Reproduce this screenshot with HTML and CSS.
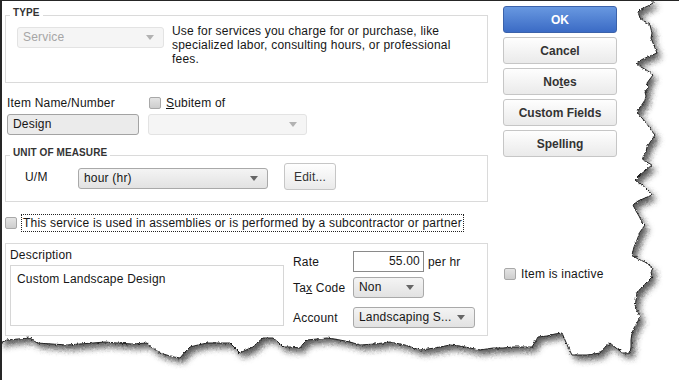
FILE: index.html
```html
<!DOCTYPE html>
<html lang="en">
<head>
  <meta charset="UTF-8">
  <title>Edit Item</title>
  <link rel="stylesheet" href="styles.css">
</head>
<body>
  <div class="dialog">
    <div class="main">
      <div class="group type-group">
        <div class="group-title">TYPE</div>
        <div class="type-body">
          <div class="select disabled type-select">
            <span>Service</span>
            <svg class="arrow" viewBox="0 0 8 5"><polygon points="0,0 8,0 4,5"/></svg>
          </div>
          <p class="type-desc">Use for services you charge for or purchase, like specialized labor, consulting hours, or professional fees.</p>
        </div>
      </div>

      <div class="name-row">
        <div class="field">
          <div class="field-label">Item Name/Number</div>
          <div class="textbox name-box">Design</div>
        </div>
        <div class="field">
          <div class="field-label check sub-check"><span class="box"></span><span><u>S</u>ubitem of</span></div>
          <div class="select disabled sub-select">
            <span></span>
            <svg class="arrow" viewBox="0 0 8 5"><polygon points="0,0 8,0 4,5"/></svg>
          </div>
        </div>
      </div>

      <div class="group uom-group">
        <div class="group-title">UNIT OF MEASURE</div>
        <div class="uom-row">
          <span class="uom-label">U/M</span>
          <div class="select uom-select">
            <span>hour (hr)</span>
            <svg class="arrow" viewBox="0 0 8 5"><polygon points="0,0 8,0 4,5"/></svg>
          </div>
          <div class="btn edit-btn">Edit...</div>
        </div>
      </div>

      <div class="assembly-row">
        <span class="box"></span>
        <span class="focus-label">This service is used in assemblies or is performed by a subcontractor or partner</span>
      </div>

      <div class="group detail-group">
        <div class="desc-col">
          <div class="desc-label">Description</div>
          <div class="desc-box">Custom Landscape Design</div>
        </div>
        <div class="price-col">
          <div class="price-row">
            <span class="plabel">Rate</span>
            <div class="rate-box">55.00</div>
            <span class="per">per hr</span>
          </div>
          <div class="price-row">
            <span class="plabel">Ta<u>x</u> Code</span>
            <div class="select tax-select">
              <span>Non</span>
              <svg class="arrow" viewBox="0 0 8 5"><polygon points="0,0 8,0 4,5"/></svg>
            </div>
          </div>
          <div class="price-row account-row">
            <span class="plabel">Account</span>
            <div class="select acct-select">
              <span>Landscaping S...</span>
              <svg class="arrow" viewBox="0 0 8 5"><polygon points="0,0 8,0 4,5"/></svg>
            </div>
          </div>
        </div>
      </div>
    </div>

    <div class="side">
      <div class="btn primary">OK</div>
      <div class="btn">Cancel</div>
      <div class="btn">No<u>t</u>es</div>
      <div class="btn">Custom Fields</div>
      <div class="btn">Spellin<u>g</u></div>
      <div class="check inactive"><span class="box"></span><span>Item is inactive</span></div>
    </div>

    <!-- torn paper edge drawn over the dialog -->
    <svg class="tear" width="679" height="380" viewBox="0 0 679 380">
      <defs>
        <filter id="soft" x="-5%" y="-5%" width="110%" height="110%"><feGaussianBlur stdDeviation="3"/></filter>
        <filter id="rough" x="-2%" y="-2%" width="104%" height="104%">
          <feTurbulence type="fractalNoise" baseFrequency="0.45" numOctaves="2" seed="4" result="noise"/>
          <feDisplacementMap in="SourceGraphic" in2="noise" scale="3" xChannelSelector="R" yChannelSelector="G"/>
        </filter>
        <clipPath id="outside">
          <path clip-rule="evenodd" d="M-5 -5H684V385H-5Z M0 0 L653 0 653 3 648 6 641 9 638 12 639 15 640 18 644 21 650 25 651 29 652 33 651 38 653 43 655 48 657 53 650 56 643 59 636 63 641 67 648 71 653 75 650 79 647 83 648 88 645 92 646 96 645 100 641 106 637 112 642 118 647 124 651 130 655 135 651 141 647 147 646 152 643 157 643 160 652 165 646 170 640 175 635 180 640 184 645 187 649 191 652 195 645 198 638 201 633 205 636 211 639 216 642 222 645 225 640 232 637 240 634 247 632 255 638 259 645 262 653 268 651 272 652 277 646 283 641 288 637 293 636 300 635 307 638 312 640 317 637 323 634 328 632 333 631 340 631 347 630 353 623 353 616 348 610 343 605 347 600 353 594 354 587 355 580 355 572 355 568 347 565 340 562 333 555 334 547 336 538 337 535 342 532 347 522 347 513 347 503 348 493 348 480 350 470 348 460 346 450 345 435 348 420 350 405 345 390 342 375 344 360 345 350 342 340 340 327 338 317 339 307 340 303 344 300 348 291 347 283 347 278 342 273 338 263 338 258 342 253 347 246 350 240 353 235 348 230 343 218 343 207 343 198 345 190 347 185 352 180 358 170 356 160 353 153 348 147 343 132 344 117 343 105 342 93 343 80 344 67 345 52 344 37 343 33 340 30 338 18 339 7 340 0 343Z"/>
        </clipPath>
      </defs>
      <g filter="url(#rough)">
        <rect x="-5" y="-5" width="689" height="390" fill="#fff" clip-path="url(#outside)"/>
        <g clip-path="url(#outside)">
          <path transform="translate(4,5)" fill="#000" fill-opacity="0.65" filter="url(#soft)" d="M0 0 L653 0 653 3 648 6 641 9 638 12 639 15 640 18 644 21 650 25 651 29 652 33 651 38 653 43 655 48 657 53 650 56 643 59 636 63 641 67 648 71 653 75 650 79 647 83 648 88 645 92 646 96 645 100 641 106 637 112 642 118 647 124 651 130 655 135 651 141 647 147 646 152 643 157 643 160 652 165 646 170 640 175 635 180 640 184 645 187 649 191 652 195 645 198 638 201 633 205 636 211 639 216 642 222 645 225 640 232 637 240 634 247 632 255 638 259 645 262 653 268 651 272 652 277 646 283 641 288 637 293 636 300 635 307 638 312 640 317 637 323 634 328 632 333 631 340 631 347 630 353 623 353 616 348 610 343 605 347 600 353 594 354 587 355 580 355 572 355 568 347 565 340 562 333 555 334 547 336 538 337 535 342 532 347 522 347 513 347 503 348 493 348 480 350 470 348 460 346 450 345 435 348 420 350 405 345 390 342 375 344 360 345 350 342 340 340 327 338 317 339 307 340 303 344 300 348 291 347 283 347 278 342 273 338 263 338 258 342 253 347 246 350 240 353 235 348 230 343 218 343 207 343 198 345 190 347 185 352 180 358 170 356 160 353 153 348 147 343 132 344 117 343 105 342 93 343 80 344 67 345 52 344 37 343 33 340 30 338 18 339 7 340 0 343Z"/>
        </g>
        <polyline fill="none" stroke="#222" stroke-width="1" points="653,0.5 653,3 648,6 641,9 638,12 639,15 640,18 644,21 650,25 651,29 652,33 651,38 653,43 655,48 657,53 650,56 643,59 636,63 641,67 648,71 653,75 650,79 647,83 648,88 645,92 646,96 645,100 641,106 637,112 642,118 647,124 651,130 655,135 651,141 647,147 646,152 643,157 643,160 652,165 646,170 640,175 635,180 640,184 645,187 649,191 652,195 645,198 638,201 633,205 636,211 639,216 642,222 645,225 640,232 637,240 634,247 632,255 638,259 645,262 653,268 651,272 652,277 646,283 641,288 637,293 636,300 635,307 638,312 640,317 637,323 634,328 632,333 631,340 631,347 630,353 623,353 616,348 610,343 605,347 600,353 594,354 587,355 580,355 572,355 568,347 565,340 562,333 555,334 547,336 538,337 535,342 532,347 522,347 513,347 503,348 493,348 480,350 470,348 460,346 450,345 435,348 420,350 405,345 390,342 375,344 360,345 350,342 340,340 327,338 317,339 307,340 303,344 300,348 291,347 283,347 278,342 273,338 263,338 258,342 253,347 246,350 240,353 235,348 230,343 218,343 207,343 198,345 190,347 185,352 180,358 170,356 160,353 153,348 147,343 132,344 117,343 105,342 93,343 80,344 67,345 52,344 37,343 33,340 30,338 18,339 7,340 0,343"/>
      </g>
    </svg>
  </div>
</body>
</html>
```

FILE: styles.css
```css
body {
  margin: 0;
  background: #fff;
  font-family: "Liberation Sans", Arial, sans-serif;
  font-size: 12px;
  color: #161616;
  letter-spacing: 0.2px;
}

.dialog {
  position: relative;
  display: flex;
  width: 679px;
  height: 380px;
  box-sizing: border-box;
  border-top: 1px solid #262626;
  border-left: 2px solid #262626;
  overflow: hidden;
}

.main {
  width: 486px;
  flex: none;
}

.group {
  margin-left: 3px;
  width: 483px;
  box-sizing: border-box;
  border: 1px solid #dadada;
}

.group-title {
  width: fit-content;
  margin: -9px 0 0 4px;
  padding: 0 3px;
  background: #fff;
  font-size: 10px;
  font-weight: bold;
  line-height: 12px;
  color: #333;
  letter-spacing: 0.1px;
}

.type-group {
  margin-top: 14px;
  height: 68px;
}

.type-body {
  display: flex;
  align-items: flex-start;
  gap: 8px;
  margin-top: 8px;
  padding-left: 11px;
}

.type-desc {
  margin: -3px 0 0;
  width: 296px;
  line-height: 14px;
}

.select {
  display: flex;
  align-items: center;
  justify-content: space-between;
  box-sizing: border-box;
  height: 21px;
  padding: 0 9px 0 5px;
  border: 1px solid #a9a9a9;
  border-radius: 3px;
  background: linear-gradient(#f4f4f4, #e2e2e2);
  line-height: 19px;
}

.select.disabled {
  border-color: #e3e3e3;
  background: #f5f5f5;
  color: #a6a6a6;
}

.arrow {
  width: 8px;
  height: 5px;
  fill: #666;
}

.disabled .arrow {
  fill: #b2b2b2;
}

.type-select { width: 147px; }

.name-row {
  display: flex;
  gap: 9px;
  margin: 13px 0 0 5px;
}

.field-label {
  height: 14px;
  line-height: 14px;
}

.check {
  display: flex;
  align-items: center;
  gap: 5px;
}

.sub-check { padding-left: 1px; }

.box {
  flex: none;
  width: 12px;
  height: 12px;
  box-sizing: border-box;
  border: 1px solid #a8a8a8;
  border-radius: 2px;
  background: linear-gradient(#e4e4e4, #cdcdcd);
}

.textbox {
  box-sizing: border-box;
  height: 21px;
  border: 1px solid #a3a3a3;
  border-radius: 3px;
  background: #ebebeb;
  padding-left: 5px;
  line-height: 19px;
}

.name-box {
  margin-top: 4px;
  width: 132px;
}

.sub-select {
  margin-top: 4px;
  width: 159px;
}

.uom-group {
  margin-top: 20px;
  height: 47px;
}

.uom-row {
  display: flex;
  align-items: flex-start;
  margin-top: 4px;
  padding-left: 19px;
}

.uom-label {
  width: 53px;
  margin-top: 7px;
  line-height: 14px;
}

.uom-select {
  width: 190px;
  margin-top: 5px;
}

.btn {
  display: flex;
  align-items: center;
  justify-content: center;
  box-sizing: border-box;
  height: 27px;
  border: 1px solid #c6c6c6;
  border-radius: 3px;
  background: linear-gradient(#fefefe, #eaeaea);
  color: #333;
  font-weight: bold;
  letter-spacing: 0;
}

.btn.primary {
  border-color: #3b62aa;
  background: linear-gradient(#6898e0, #3b6bc5);
  color: #fff;
}

.edit-btn {
  margin-left: 16px;
  width: 52px;
  font-weight: normal;
  letter-spacing: 0.2px;
}

.assembly-row {
  display: flex;
  align-items: center;
  gap: 4px;
  margin: 12px 0 0 3px;
  height: 18px;
}

.focus-label {
  border: 1px dotted #222;
  padding: 0 1px;
  line-height: 16px;
}

.detail-group {
  display: flex;
  margin-top: 11px;
  height: 93px;
  padding: 4px 0 0 4px;
}

.desc-col { width: 274px; }

.desc-label { line-height: 14px; }

.desc-box {
  margin-top: 3px;
  height: 61px;
  box-sizing: border-box;
  border: 1px solid #d6d6d6;
  padding: 6px 6px;
  line-height: 14px;
}

.price-col {
  margin-left: 9px;
  padding-top: 3px;
}

.price-row {
  display: flex;
  align-items: center;
  height: 21px;
}

.price-row + .price-row { margin-top: 5px; }

.price-row.account-row { margin-top: 9px; }

.plabel { width: 60px; }

.rate-box {
  width: 71px;
  height: 21px;
  box-sizing: border-box;
  border: 1px solid #8a8a8a;
  background: #fff;
  text-align: right;
  padding-right: 3px;
  line-height: 19px;
}

.per { margin-left: 4px; }

.tax-select { width: 71px; }

.acct-select { width: 122px; }

.side {
  flex: none;
  display: flex;
  flex-direction: column;
  gap: 4px;
  width: 114px;
  padding: 5px 0 0 15px;
}

.inactive {
  margin: 106px 0 0 1px;
  line-height: 14px;
}

.tear {
  position: absolute;
  top: -1px;
  left: -2px;
  pointer-events: none;
}
```
